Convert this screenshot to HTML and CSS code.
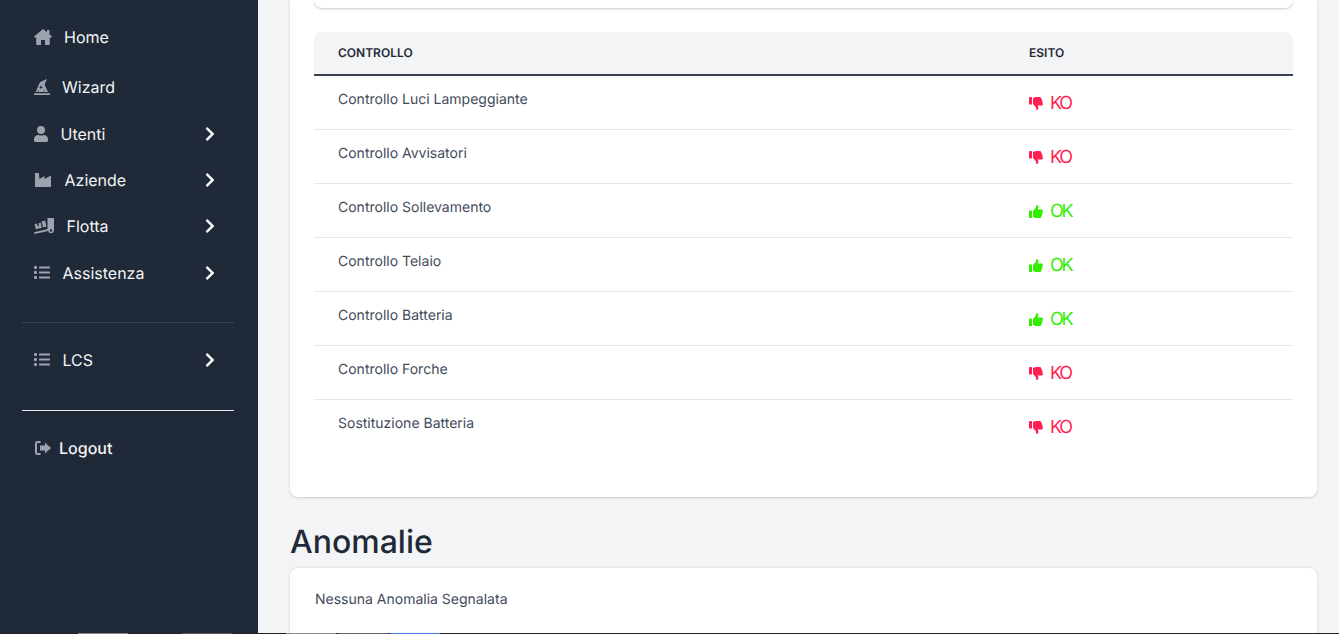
FILE: index.html
```html
<!DOCTYPE html>
<html lang="it">
<head>
    <meta charset="UTF-8">
    <meta name="viewport" content="width=device-width, initial-scale=1.0">
    <title>Controlli</title>
    <link rel="stylesheet" href="styles.css">
</head>
<body>
    <div class="layout">
        <aside class="sidebar">
            <ul class="menu">
                <li class="menu-item item-home">
                    <svg class="icon icon-home" viewBox="0 0 18 16"><path d="M9 0 13 3.300V1h2.500v4.400L18 7.500 16.800 9 15.800 8.200V15a1 1 0 0 1-1 1H11v-5H7v5H3.200a1 1 0 0 1-1-1V8.200L1.200 9 0 7.500z"/></svg>
                    <span class="label">Home</span>
                </li>
                <li class="menu-item item-wizard">
                    <svg class="icon icon-wizard" viewBox="0 0 512 512"><path d="M51 416 174 138c14-33 43-58 78-68L416 0l-58 128c-15 32-13 68 2 100l88 188z"/><rect x="0" y="456" width="512" height="56" rx="10"/><path fill="#1f2937" d="m224 200 20 44 44 20-44 20-20 44-20-44-44-20 44-20zM320 340l10 24 24 10-24 10-10 24-10-24-24-10 24-10zM130 350l10 24 24 10-24 10-10 24-10-24-24-10 24-10z"/></svg>
                    <span class="label">Wizard</span>
                </li>
                <li class="menu-item item-utenti">
                    <svg class="icon icon-user" viewBox="0 0 448 512"><path d="M224 256a128 128 0 1 0 0-256 128 128 0 0 0 0 256zm90 32h-17a174 174 0 0 1-146 0h-17C60 288 0 348 0 422v42c0 27 21 48 48 48h352c27 0 48-21 48-48v-42c0-74-60-134-134-134z"/></svg>
                    <span class="label">Utenti</span>
                    <svg class="chevron" viewBox="0 0 320 512"><path d="M285 273 91 467c-9 9-24 9-34 0l-22-22c-9-9-9-24 0-34l154-155L35 101c-9-10-9-25 0-34l22-22c10-9 25-9 34 0l194 194c10 9 10 25 0 34z"/></svg>
                </li>
                <li class="menu-item item-aziende">
                    <svg class="icon icon-factory" viewBox="0 0 16 14"><path d="M0 0h3.800l.7 6L9.500 3v3l6.500-3.500V14H0z"/></svg>
                    <span class="label">Aziende</span>
                    <svg class="chevron" viewBox="0 0 320 512"><path d="M285 273 91 467c-9 9-24 9-34 0l-22-22c-9-9-9-24 0-34l154-155L35 101c-9-10-9-25 0-34l22-22c10-9 25-9 34 0l194 194c10 9 10 25 0 34z"/></svg>
                </li>
                <li class="menu-item item-flotta">
                    <svg class="icon icon-truck" viewBox="0 0 20 16"><path d="M13.500 0H20v12.500a3 3 0 0 1-5.900.6L.5 16 0 14.300l13-3c.3-.1.500-.3.500-.6z"/><path d="M.6 6.200 3 5.600l.6 2.700 1.400-.3-.6-2.700 2.300-.6 1.200 5L1.800 11.300z"/><path d="M7.500 3.500 11 2.600l1.500 6-3.300.8z"/><circle cx="17" cy="12.500" r="1.200" fill="#1f2937"/></svg>
                    <span class="label">Flotta</span>
                    <svg class="chevron" viewBox="0 0 320 512"><path d="M285 273 91 467c-9 9-24 9-34 0l-22-22c-9-9-9-24 0-34l154-155L35 101c-9-10-9-25 0-34l22-22c10-9 25-9 34 0l194 194c10 9 10 25 0 34z"/></svg>
                </li>
                <li class="menu-item item-assist">
                    <svg class="icon icon-list" viewBox="0 0 16 13"><rect x="0" y="0" width="3" height="3" rx="1"/><rect x="0" y="5" width="3" height="3" rx="1"/><rect x="0" y="10" width="3" height="3" rx="1"/><rect x="5" y=".6" width="11" height="1.800" rx=".4"/><rect x="5" y="5.600" width="11" height="1.800" rx=".4"/><rect x="5" y="10.600" width="11" height="1.800" rx=".4"/></svg>
                    <span class="label">Assistenza</span>
                    <svg class="chevron" viewBox="0 0 320 512"><path d="M285 273 91 467c-9 9-24 9-34 0l-22-22c-9-9-9-24 0-34l154-155L35 101c-9-10-9-25 0-34l22-22c10-9 25-9 34 0l194 194c10 9 10 25 0 34z"/></svg>
                </li>
            </ul>
            <hr class="sep sep-dark">
            <ul class="menu">
                <li class="menu-item item-lcs">
                    <svg class="icon icon-list" viewBox="0 0 16 13"><rect x="0" y="0" width="3" height="3" rx="1"/><rect x="0" y="5" width="3" height="3" rx="1"/><rect x="0" y="10" width="3" height="3" rx="1"/><rect x="5" y=".6" width="11" height="1.800" rx=".4"/><rect x="5" y="5.600" width="11" height="1.800" rx=".4"/><rect x="5" y="10.600" width="11" height="1.800" rx=".4"/></svg>
                    <span class="label">LCS</span>
                    <svg class="chevron" viewBox="0 0 320 512"><path d="M285 273 91 467c-9 9-24 9-34 0l-22-22c-9-9-9-24 0-34l154-155L35 101c-9-10-9-25 0-34l22-22c10-9 25-9 34 0l194 194c10 9 10 25 0 34z"/></svg>
                </li>
            </ul>
            <hr class="sep sep-light">
            <ul class="menu">
                <li class="menu-item item-logout">
                    <svg class="icon icon-logout" viewBox="0 0 16 14"><path d="M5.500 0H2.500A2.500 2.500 0 0 0 0 2.500v9A2.500 2.500 0 0 0 2.500 14h3v-2h-3a.5.5 0 0 1-.5-.5v-9a.5.5 0 0 1 .5-.5h3z"/><path d="M10 1.500 16 7l-6 5.500V9.500H5v-5h5z"/></svg>
                    <span class="label">Logout</span>
                </li>
            </ul>
        </aside>

        <main class="content">
            <section class="card card-main">
                <div class="inner-card"></div>
                <table class="checks">
                    <thead>
                        <tr><th class="col-name">Controllo</th><th>Esito</th></tr>
                    </thead>
                    <tbody>
                        <tr><td class="col-name">Controllo Luci Lampeggiante</td><td><span class="esito ko"><svg class="thumb" viewBox="0 0 14 13"><use href="#thumb-down"/></svg>KO</span></td></tr>
                        <tr><td class="col-name">Controllo Avvisatori</td><td><span class="esito ko"><svg class="thumb" viewBox="0 0 14 13"><use href="#thumb-down"/></svg>KO</span></td></tr>
                        <tr><td class="col-name">Controllo Sollevamento</td><td><span class="esito ok"><svg class="thumb" viewBox="0 0 14 13"><use href="#thumb-up"/></svg>OK</span></td></tr>
                        <tr><td class="col-name">Controllo Telaio</td><td><span class="esito ok"><svg class="thumb" viewBox="0 0 14 13"><use href="#thumb-up"/></svg>OK</span></td></tr>
                        <tr><td class="col-name">Controllo Batteria</td><td><span class="esito ok"><svg class="thumb" viewBox="0 0 14 13"><use href="#thumb-up"/></svg>OK</span></td></tr>
                        <tr><td class="col-name">Controllo Forche</td><td><span class="esito ko"><svg class="thumb" viewBox="0 0 14 13"><use href="#thumb-down"/></svg>KO</span></td></tr>
                        <tr class="last"><td class="col-name">Sostituzione Batteria</td><td><span class="esito ko"><svg class="thumb" viewBox="0 0 14 13"><use href="#thumb-down"/></svg>KO</span></td></tr>
                    </tbody>
                </table>
            </section>

            <h2 class="section-title">Anomalie</h2>
            <section class="card card-anomalie">
                <p>Nessuna Anomalia Segnalata</p>
            </section>
        </main>
    </div>
    <div class="strip">
        <span class="tab tab-1"></span>
        <span class="tab tab-2"></span>
        <span class="tab tab-3"></span>
        <span class="tab tab-4"></span>
        <span class="tab tab-blue"></span>
    </div>

    <svg class="defs" width="0" height="0">
        <symbol id="thumb-up" viewBox="0 0 14 13"><rect x="0" y="5.500" width="3" height="7.500" rx=".6"/><path d="M4 6 7 2.500 7.300 0c1.700 0 2.400 1.300 2 2.800L8.700 4.600h4c1.500 0 1.600 2 .6 2.400.6.700.4 1.800-.4 2.200.3.900 0 1.700-.7 2 .1 1-.5 1.800-1.600 1.800H7.500C6 13 5 12.300 4 12z"/></symbol>
        <symbol id="thumb-down" viewBox="0 0 14 13"><rect x="0" y="0" width="3" height="7.500" rx=".6"/><path d="M4 7 7 10.500 7.300 13c1.700 0 2.400-1.300 2-2.800L8.700 8.400h4c1.500 0 1.600-2 .6-2.400.6-.7.4-1.800-.4-2.200.3-.9 0-1.700-.7-2 .1-1-.5-1.800-1.600-1.800H7.500C6 0 5 .7 4 1z"/></symbol>
    </svg>
</body>
</html>
```

FILE: styles.css
```css
*{
    box-sizing: border-box;
}
html, body{
    margin: 0;
    height: 100%;
    overflow: hidden;
}
body{
    background-color: #f3f4f6;
    color: #414b5a;
    font-family: Inter, "Noto Sans", sans-serif;
    font-size: 14px;
    text-rendering: geometricPrecision;
}
.layout{
    display: flex;
    height: 633px;
    overflow: hidden;
}
.defs{
    position: absolute;
}

/* striscia in fondo */
.strip{
    display: flex;
    height: 1px;
    background-color: #222;
    padding-left: 78px;
}
.tab{
    width: 50px;
    background-color: #888;
}
.tab-2{ margin-left: 54px; background-color: #555; }
.tab-3{ margin-left: 54px; }
.tab-4{ margin-left: 2px; background-color: #666; }
.tab-blue{ margin-left: 2px; background-color: #3b78e7; }

/* sidebar */
.sidebar{
    width: 258px;
    flex-shrink: 0;
    background-color: #1f2937;
    padding: 14px 24px 0 22px;
    color: #f3f4f6;
}
.menu{
    list-style: none;
    margin: 0;
    padding: 0;
}
.menu-item{
    display: flex;
    align-items: center;
    height: 46.2px;
    padding-left: 12px;
    font-size: 16px;
    line-height: 24px;
}
.icon{
    fill: #9ca3af;
    flex-shrink: 0;
}
.icon-home{ width: 18px; height: 16px; margin-right: 12px; }
.icon-wizard{ width: 16px; height: 16px; margin-right: 12px; }
.icon-user{ width: 14px; height: 16px; margin-right: 12.500px; }
.icon-factory{ width: 16px; height: 14px; margin-left: 1px; margin-right: 13.500px; }
.icon-truck{ width: 20px; height: 16px; margin-right: 12.500px; }
.icon-list{ width: 16px; height: 13px; margin-right: 12.500px; }
.icon-logout{ width: 16px; height: 14px; margin-left: 1px; margin-right: 8px; }
.label{
    flex: 1;
}
.chevron{
    width: 10px;
    height: 16px;
    fill: #f9fafb;
    margin-right: 19px;
}
.item-home{ height: 46px; margin-bottom: 4px; }
.item-wizard{ height: 46px; margin-bottom: .8px; }
.item-assist{ height: 47px; }
.sep{
    border: 0;
    height: 1px;
    margin: 0;
}
.sep-dark{
    background-color: #374151;
    margin-top: 25.500px;
    margin-bottom: 14px;
}
.sep-light{
    background-color: #e5e7eb;
    margin-top: 26.800px;
    margin-bottom: 14px;
}
.item-logout .label{
    font-weight: 500;
}

/* contenuto */
.content{
    flex: 1;
    padding: 0 22px 0 32px;
    min-width: 0;
    overflow: hidden;
}
.card{
    background-color: #fff;
    border-radius: 8px;
    box-shadow: 0 1px 3px rgba(0,0,0,.12), 0 1px 2px rgba(0,0,0,.06);
}
.card-main{
    height: 497px;
    padding: 0 24px;
    border-top-left-radius: 0;
    border-top-right-radius: 0;
}
.inner-card{
    height: 8px;
    background-color: #fff;
    border-radius: 0 0 8px 8px;
    box-shadow: 0 1px 3px rgba(0,0,0,.14), 0 1px 2px rgba(0,0,0,.08);
    margin-bottom: 24px;
}
.checks{
    width: 100%;
    border-collapse: separate;
    border-spacing: 0;
    table-layout: fixed;
}
.checks th{
    height: 44px;
    background-color: #f3f4f6;
    border-bottom: 2px solid #374151;
    text-align: left;
    font-size: 12px;
    font-weight: 600;
    color: #1f2937;
    text-transform: uppercase;
    padding: 0 0 2px 0;
}
.checks th:first-child{ border-top-left-radius: 8px; }
.checks th:last-child{ border-top-right-radius: 8px; }
.col-name{
    width: 715px;
    padding-left: 24px !important;
}
.checks td{
    height: 54px;
    border-bottom: 1px solid #e5e7eb;
    padding: 0;
}
.checks td.col-name{
    padding-bottom: 6px;
}
.checks .last td{
    border-bottom-color: transparent;
}
.esito{
    display: flex;
    align-items: center;
    font-size: 18px;
    line-height: 20px;
    letter-spacing: -2.200px;
    padding-top: 2px;
}
.thumb{
    width: 14px;
    height: 13px;
    margin-right: 7px;
    fill: currentColor;
}
.ko{ color: #ff1f53; }
.ok{ color: #33ee00; }

.section-title{
    margin: 25px 0 5px;
    font-size: 32px;
    line-height: 40px;
    font-weight: 500;
    color: #1f2937;
}
.card-anomalie{
    height: 70px;
    padding: 23px 25px 0;
    border-top: 1px solid #e5e7eb;
    border-radius: 8px 8px 0 0;
}
.card-anomalie p{
    margin: 0;
    line-height: 18px;
}
```
